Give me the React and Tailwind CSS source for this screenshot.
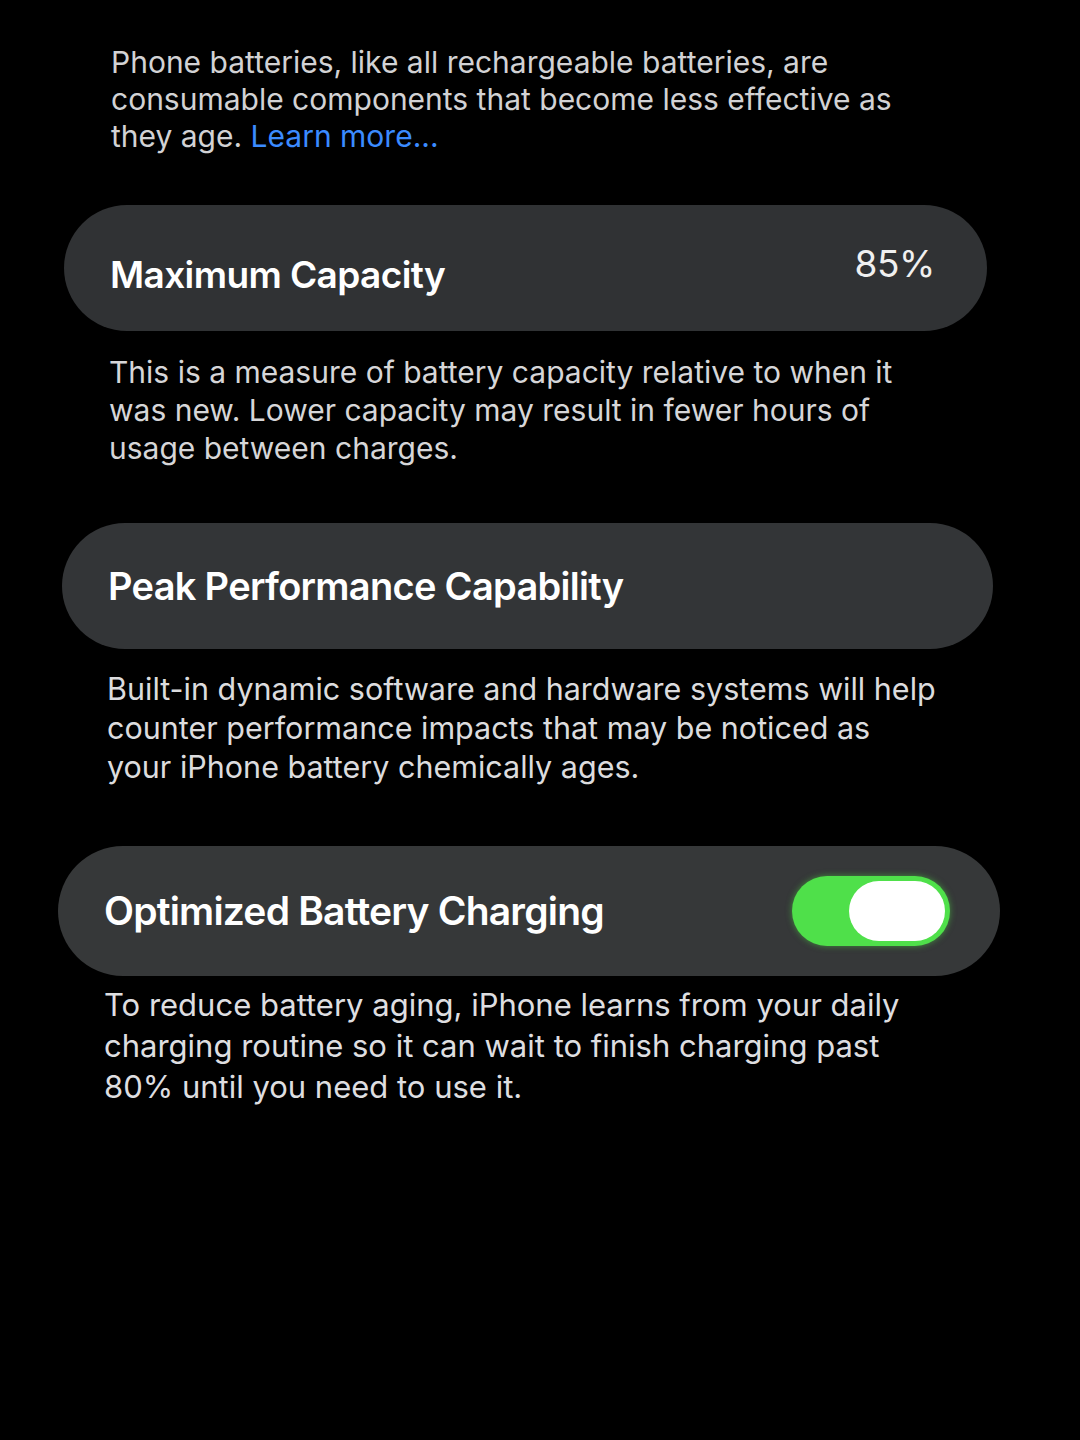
export default function App() {
  return (
    <div className="w-[1080px] h-[1440px] bg-black overflow-hidden font-['Inter','Liberation_Sans',sans-serif] antialiased">
      <div className="pt-[44px] pl-[111px] text-[30px] leading-[37px] text-[#d2d2d4] whitespace-nowrap">
        Phone batteries, like all rechargeable batteries, are<br />
        consumable components that become less effective as<br />
        they age. <span className="text-[#3b8bff]">Learn more...</span>
      </div>

      <div className="mt-[50px] ml-[64px] mr-[93px] h-[126px] rounded-full bg-[#303234] flex items-center justify-between pl-[46px] pr-[52px]">
        <span className="text-[37px] font-semibold text-white tracking-[-0.6px] pt-[14px]">Maximum Capacity</span>
        <span className="text-[37px] text-[#f0f0f0] tracking-[-0.4px] pb-[8px]">85%</span>
      </div>

      <p className="mt-[22px] pl-[109px] text-[30px] leading-[38px] text-[#d6d6d8] whitespace-nowrap">
        This is a measure of battery capacity relative to when it<br />
        was new. Lower capacity may result in fewer hours of<br />
        usage between charges.
      </p>

      <div className="mt-[56px] ml-[62px] mr-[87px] h-[126px] rounded-full bg-[#333537] flex items-center pl-[46px]">
        <span className="text-[38px] font-semibold text-white tracking-[-0.7px]">Peak Performance Capability</span>
      </div>

      <p className="mt-[20px] pl-[107px] text-[30.5px] leading-[39px] text-[#dcdcde] whitespace-nowrap">
        Built-in dynamic software and hardware systems will help<br />
        counter performance impacts that may be noticed as<br />
        your iPhone battery chemically ages.
      </p>

      <div className="mt-[60px] ml-[58px] mr-[80px] h-[130px] rounded-full bg-[#363839] flex items-center justify-between pl-[46px] pr-[50px]">
        <span className="text-[39px] font-semibold text-white tracking-[-0.8px]">Optimized Battery Charging</span>
        <div className="w-[158px] h-[70px] rounded-full bg-[#4fe04a] flex items-center justify-end pr-[5px] shadow-[0_0_6px_rgba(80,230,70,0.5)]">
          <div className="w-[96px] h-[60px] rounded-full bg-white" />
        </div>
      </div>

      <p className="mt-[8px] pl-[104px] text-[31px] leading-[41px] text-[#dedee0] whitespace-nowrap">
        To reduce battery aging, iPhone learns from your daily<br />
        charging routine so it can wait to finish charging past<br />
        80% until you need to use it.
      </p>
    </div>
  );
}
